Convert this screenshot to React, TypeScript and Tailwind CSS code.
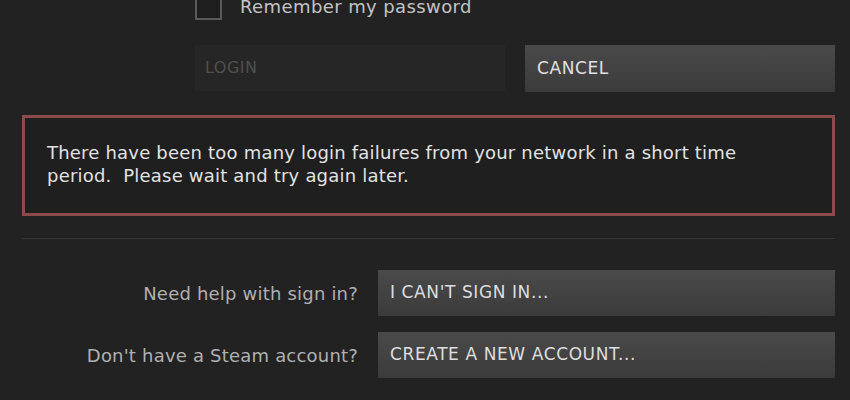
import React from 'react';

const App: React.FC = () => {
  return (
    <div className="w-[850px] h-[400px] overflow-hidden bg-[#222222] pl-[22px] pr-[15px] font-['DejaVu_Sans',Verdana,sans-serif]">
      <div className="ml-[173px] mt-[-7px] flex items-center gap-[18px]">
        <div className="w-[27px] h-[27px] border-2 border-[#5a5a5a] bg-[#1e1e1e]" />
        <span className="text-[18px] tracking-[0.4px] text-[#c4c4c4]">Remember my password</span>
      </div>

      <div className="mt-[25px] flex gap-[20px] ml-[173px]">
        <button className="w-[310px] h-[46px] bg-[#262626] text-left pl-[10px] text-[16px] tracking-[0.5px] text-[#505050]">
          LOGIN
        </button>
        <button className="w-[310px] h-[47px] bg-gradient-to-b from-[#4a4a4a] to-[#3b3b3b] text-left pl-[12px] text-[17px] tracking-[0.6px] text-[#e0e0e0]">
          CANCEL
        </button>
      </div>

      <div className="mt-[23px] h-[101px] border-[3px] border-[#8d4a4a] bg-[#1f1f1f] pl-[22px] pt-[23px] text-[18px] tracking-[0.2px] leading-[23px] text-[#e2e2e2]">
        There have been too many login failures from your network in a short time
        <br />
        period.&nbsp; Please wait and try again later.
      </div>

      <div className="mt-[22px] h-px bg-[#363636]" />

      <div className="mt-[31px] flex flex-col gap-[16px]">
        <div className="flex items-center">
          <span className="w-[336px] text-right text-[18px] tracking-[0.2px] text-[#b0b0b0]">Need help with sign in?</span>
          <button className="ml-[20px] w-[457px] h-[46px] bg-gradient-to-b from-[#4a4a4a] to-[#3b3b3b] text-left pl-[12px] text-[17px] tracking-[0.6px] text-[#dedede]">
            I CAN'T SIGN IN...
          </button>
        </div>
        <div className="flex items-center">
          <span className="w-[336px] text-right text-[18px] tracking-[0.2px] text-[#b0b0b0]">Don't have a Steam account?</span>
          <button className="ml-[20px] w-[457px] h-[46px] bg-gradient-to-b from-[#4a4a4a] to-[#3b3b3b] text-left pl-[12px] text-[17px] tracking-[0.6px] text-[#dedede]">
            CREATE A NEW ACCOUNT...
          </button>
        </div>
      </div>
    </div>
  );
};

export default App;
